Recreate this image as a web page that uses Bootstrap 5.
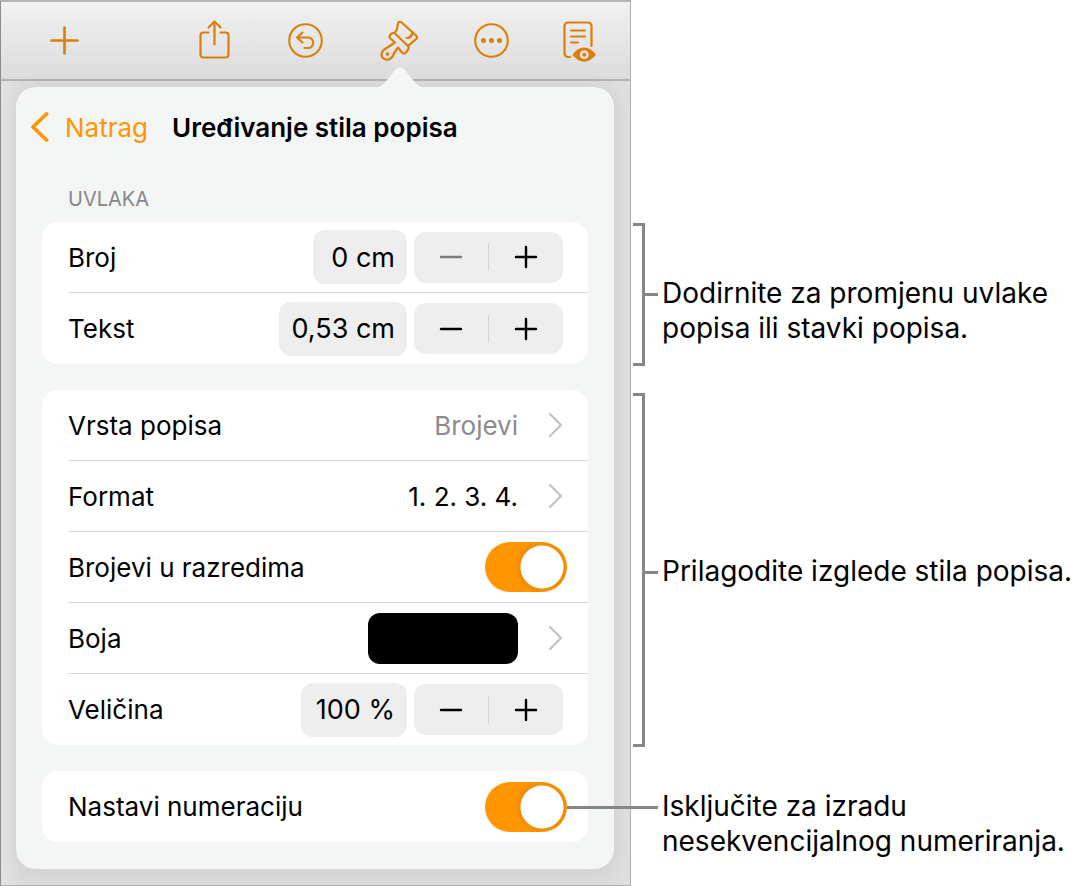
<!DOCTYPE html>
<html lang="hr">
<head>
<meta charset="utf-8">
<meta name="viewport" content="width=device-width, initial-scale=1">
<title>Uređivanje stila popisa</title>
<link href="https://cdn.jsdelivr.net/npm/bootstrap@5.3.0/dist/css/bootstrap.min.css" rel="stylesheet">
<style>
:root { --row: 71px; --group-gap: 26px; --accent: #ff9500; --rule: #868686; }
body { font-family: Inter, "Liberation Sans", sans-serif; font-size: 26px; line-height: 35px; color: #000; background: #fff; }
.figure-grid { display: grid; grid-template-columns: minmax(0, 631fr) minmax(0, 449fr); }
.device { border: 1px solid #b0b0b0; border-left-color: #8c8c8c; border-top: 2px solid #b4b4b4; background: linear-gradient(90deg, #e2e2e2, #dcdcdc 3%, #dcdcdc 97%, #dfdfdf); }
.toolbar { height: 79px; padding: 0 27px 0 43px; border-bottom: 2px solid #b2b2b2; background: linear-gradient(#f1f1f1, #dcdcdc); color: #dc7f06; }
.toolbar .btn, .toolbar svg { width: 40px; height: 44px; }
.tool-set { gap: 52px; }
svg { fill: none; stroke: currentColor; stroke-linecap: round; stroke-linejoin: round; display: block; }
.pane { margin: 6px 16px 16px 15px; padding: 0 26px 27px; border-radius: 20px; background: #f4f6f5; box-shadow: 0 4px 24px rgba(0,0,0,.06); }
.pane-arrow { right: 188px; top: -20px; fill: #f4f6f5; stroke: none; }
.pane-head { height: 80px; gap: 24px; margin-left: -12px; }
.pane-head h1 { font-size: 26px; line-height: 35px; font-weight: 600; }
.back-link { color: var(--accent); gap: 16px; }
.section-label { font-size: 20px; line-height: 24px; margin: 20px 0 11px; padding-left: 26px; color: #87878b; font-weight: 400; }
.settings { border-radius: 16px; background: #fff; margin-bottom: var(--group-gap); padding-left: 26px; }
.settings:last-child { margin-bottom: 0; }
.setting { height: var(--row); padding-right: 25px; border-bottom: 1px solid #d6d6d8; color: #000; }
.setting:last-child { border-bottom: 0; }
.setting.has-switch { padding-right: 21px; }
button.setting { border-width: 0 0 1px; background: none; padding-left: 0; text-align: left; }
.amount { height: 54px; border: 0; border-radius: 12px; background: #eee; text-align: right; padding: 0 12px; margin-right: 7px; font-size: 27px; color: #000; }
.w-short { width: 94px; } .w-mid { width: 106px; } .w-long { width: 128px; }
.stepper { width: 149px; height: 51px; border-radius: 12px; background: #eee; }
.stepper .btn { color: #000; border: 0; padding: 0; }
.stepper .btn:disabled { color: #7c7c7c; opacity: 1; border: 0; }
.stepper-rule { width: 1px; height: 28px; background: #d4d4d4; }
.value-text { margin-right: 30px; }
.dim { color: #8b8b90; }
.chev { color: #c2c2c4; }
.swatch { width: 150px; height: 51px; border-radius: 12px; background: #000; margin-right: 30px; }
.form-check-input.toggle { width: 82px; height: 50px; margin: 0; float: none; border: 0; border-radius: 25px; }
.form-check-input.toggle:checked { background: radial-gradient(circle at 57px 25px, #fff 21px, #ee8b00 22px, var(--accent) 27px); }
.form-check-input.toggle:not(:checked) { background: radial-gradient(circle at 25px 25px, #fff 21px, #d8d8da 22px, #e3e3e6 27px); }
.callouts { padding-top: 223px; font-size: 28px; }
.callout { margin-bottom: 27px; padding-left: 2px; }
.span-2 { height: calc(var(--row) * 2 + 1px); } .span-5 { height: calc(var(--row) * 5 - 1px); } .span-1 { height: 66px; }
.bracket { width: 12px; border: 3px solid var(--rule); border-left: 0; flex: none; }
.tick { width: 13px; height: 3px; background: var(--rule); flex: none; }
.leader { left: -64px; width: 91px; height: 3px; background: var(--rule); }
/* One line tall, so the first line stays level with the tick. */
.callout p { height: 37px; margin: 0 0 0 4px; white-space: nowrap; }
.callout.span-1 p { margin-left: 29px; }
.callout.span-5 .tick, .callout.span-5 p { margin-top: 5px; }
</style>
</head>
<body>
<main class="figure-grid">
  <section class="device">
    <nav class="toolbar d-flex align-items-center justify-content-between" aria-label="Alati">
      <button class="btn p-0 border-0 text-reset" aria-label="Dodaj"><svg viewBox="0 0 40 44" stroke-width="2.6"><path d="M7.500 21.500h26M20.500 8.500v26"/></svg></button>
      <div class="tool-set d-flex">
        <button class="btn p-0 border-0 text-reset" aria-label="Dijeli"><svg viewBox="0 0 40 44" stroke-width="2.2"><path d="M13.500 13.500H8.500a3 3 0 0 0-3 3v19a3 3 0 0 0 3 3h22a3 3 0 0 0 3-3v-19a3 3 0 0 0-3-3h-5M19.500 25.500V3M13.500 8.500l6-6 6 6"/></svg></button>
        <button class="btn p-0 border-0 text-reset" aria-label="Poništi"><svg viewBox="0 0 40 44" stroke-width="2.100"><circle cx="18.500" cy="21.500" r="16.300"/><path d="M15.500 13.500l-5.500 5 5.500 5M10.500 18.500h10.500a5 5 0 0 1 0 10.500h-3.500"/></svg></button>
        <button class="btn p-0 border-0 text-reset" aria-label="Format"><svg viewBox="0 0 40 44" stroke-width="2.200"><path d="M15.500 14C18 12 18.500 9 18.700 5.500C19 2.500 21.500 2 23 3.800L37.300 16.800Q38.800 18.300 37.300 19.800L29 27Q30.500 29 28.500 31.500L27 33.500Q25 35.500 23 33.500L19 28.500C18 30 15.500 33 14 36.500C12 41 7 42 4 39C1 35.500 3 32 6 30C9.500 28 13 25.500 16 23.500L11.500 19.500Q9.500 17.500 11.500 15.500Q13.300 13.500 15.500 14zM15.500 14L29 27"/><path fill="currentColor" stroke-width=".8" d="M32.800 12.800C32.500 16 30 18.500 26.500 19C30 20.500 33 19.500 34 15z"/><circle cx="8.500" cy="35" r="1.200" fill="currentColor" stroke-width="1.200"/></svg></button>
        <button class="btn p-0 border-0 text-reset" aria-label="Više"><svg viewBox="0 0 40 44" stroke-width="2.100"><circle cx="20.500" cy="21.500" r="16.300"/><g fill="currentColor" stroke="none"><circle cx="12.500" cy="21.500" r="2.500"/><circle cx="20.500" cy="21.500" r="2.500"/><circle cx="28.500" cy="21.500" r="2.500"/></g></svg></button>
        <button class="btn p-0 border-0 text-reset" aria-label="Prikaz čitanja"><svg viewBox="0 0 40 44" stroke-width="2.200"><path d="M7 38H5A3.500 3.500 0 0 1 1.500 34.500V7A3.500 3.500 0 0 1 5 3.500h20A3.500 3.500 0 0 1 28.500 7v20M8 11.500h14M8 17.500h14M8 23.500h7"/><path d="M9.500 35.700c7-9.700 16-9.700 23.500 0-7.500 9.300-16.500 9.300-23.500 0z" fill="currentColor" stroke="none"/><circle cx="21.300" cy="35.700" r="3.200" stroke="#e6e6e6" stroke-width="2.400"/></svg></button>
      </div>
    </nav>

    <div class="pane position-relative">
      <svg class="pane-arrow position-absolute" width="52" height="21" viewBox="0 0 52 21" aria-hidden="true"><path d="M0 21C9 20 12 14 17 8c4-5 6-8 9-8s5 3 9 8c5 6 8 12 17 13z"/></svg>
      <header class="pane-head d-flex align-items-center">
        <a href="#" class="back-link d-flex align-items-center text-decoration-none"><svg width="19" height="32" viewBox="0 0 19 32" stroke-width="3.800" aria-hidden="true"><path d="M16.500 3L3 16l13.500 13"/></svg>Natrag</a>
        <h1 class="m-0 text-nowrap">Uređivanje stila popisa</h1>
      </header>

      <h2 class="section-label">UVLAKA</h2>
      <div class="settings">
        <div class="setting d-flex align-items-center">
          <label class="me-auto" for="number-indent">Broj</label>
          <input class="amount w-short" id="number-indent" value="0 cm">
          <div class="stepper d-flex align-items-center">
            <button class="btn flex-fill" disabled aria-label="Smanji"><svg class="m-auto" width="24" height="24" viewBox="0 0 24 24" stroke-width="2.400"><path d="M2 12h20"/></svg></button>
            <span class="stepper-rule"></span>
            <button class="btn flex-fill" aria-label="Povećaj"><svg class="m-auto" width="24" height="24" viewBox="0 0 24 24" stroke-width="2.400"><path d="M2 12h20M12 2v20"/></svg></button>
          </div>
        </div>
        <div class="setting d-flex align-items-center">
          <label class="me-auto" for="text-indent">Tekst</label>
          <input class="amount w-long" id="text-indent" value="0,53 cm">
          <div class="stepper d-flex align-items-center">
            <button class="btn flex-fill" aria-label="Smanji"><svg class="m-auto" width="24" height="24" viewBox="0 0 24 24" stroke-width="2.400"><path d="M2 12h20"/></svg></button>
            <span class="stepper-rule"></span>
            <button class="btn flex-fill" aria-label="Povećaj"><svg class="m-auto" width="24" height="24" viewBox="0 0 24 24" stroke-width="2.400"><path d="M2 12h20M12 2v20"/></svg></button>
          </div>
        </div>
      </div>

      <div class="settings">
        <button class="setting w-100 d-flex align-items-center">
          <span class="me-auto">Vrsta popisa</span><span class="value-text dim">Brojevi</span>
          <svg class="chev" width="15" height="26" viewBox="0 0 15 26" stroke-width="2.200"><path d="M2 2l11 11L2 24"/></svg>
        </button>
        <button class="setting w-100 d-flex align-items-center">
          <span class="me-auto">Format</span><span class="value-text">1. 2. 3. 4.</span>
          <svg class="chev" width="15" height="26" viewBox="0 0 15 26" stroke-width="2.200"><path d="M2 2l11 11L2 24"/></svg>
        </button>
        <div class="setting has-switch d-flex align-items-center">
          <label class="me-auto" for="tiered">Brojevi u razredima</label>
          <input class="form-check-input toggle" type="checkbox" role="switch" id="tiered" checked>
        </div>
        <button class="setting w-100 d-flex align-items-center">
          <span class="me-auto">Boja</span><span class="swatch"></span>
          <svg class="chev" width="15" height="26" viewBox="0 0 15 26" stroke-width="2.200"><path d="M2 2l11 11L2 24"/></svg>
        </button>
        <div class="setting d-flex align-items-center">
          <label class="me-auto" for="size">Veličina</label>
          <input class="amount w-mid" id="size" value="100 %">
          <div class="stepper d-flex align-items-center">
            <button class="btn flex-fill" aria-label="Smanji"><svg class="m-auto" width="24" height="24" viewBox="0 0 24 24" stroke-width="2.400"><path d="M2 12h20"/></svg></button>
            <span class="stepper-rule"></span>
            <button class="btn flex-fill" aria-label="Povećaj"><svg class="m-auto" width="24" height="24" viewBox="0 0 24 24" stroke-width="2.400"><path d="M2 12h20M12 2v20"/></svg></button>
          </div>
        </div>
      </div>

      <div class="settings">
        <div class="setting has-switch d-flex align-items-center">
          <label class="me-auto" for="continue">Nastavi numeraciju</label>
          <input class="form-check-input toggle" type="checkbox" role="switch" id="continue" checked>
        </div>
      </div>
    </div>
  </section>

  <aside class="callouts">
    <div class="callout span-2 d-flex align-items-center">
      <div class="bracket align-self-stretch"></div><div class="tick"></div>
      <p>Dodirnite za promjenu uvlake<br>popisa ili stavki popisa.</p>
    </div>
    <div class="callout span-5 d-flex align-items-center">
      <div class="bracket align-self-stretch"></div><div class="tick"></div>
      <p>Prilagodite izglede stila popisa.</p>
    </div>
    <div class="callout span-1 d-flex align-items-center position-relative mb-0">
      <div class="leader position-absolute"></div>
      <p>Isključite za izradu<br>nesekvencijalnog numeriranja.</p>
    </div>
  </aside>
</main>
<script src="https://cdn.jsdelivr.net/npm/bootstrap@5.3.0/dist/js/bootstrap.bundle.min.js"></script>
</body>
</html>
